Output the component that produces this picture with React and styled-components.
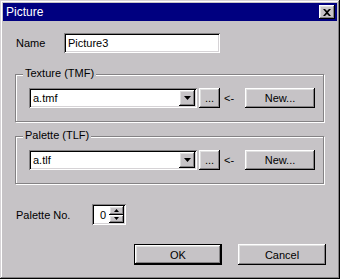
import React from 'react'
import styled, { createGlobalStyle } from 'styled-components'

const Global = createGlobalStyle`
  html, body { margin: 0; padding: 0; background: #c6c3c6; }
  * { box-sizing: border-box; }
  body { font-family: "Liberation Sans", Arial, sans-serif; font-size: 11px; color: #000; }
`

const raised = `
  box-shadow: inset -1px -1px 0 #000, inset 1px 1px 0 #fff,
    inset -2px -2px 0 #848284, inset 2px 2px 0 #dfdfdf;
`
const sunken = `
  box-shadow: inset 1px 1px 0 #848284, inset -1px -1px 0 #fff,
    inset 2px 2px 0 #000, inset -2px -2px 0 #d6d3d6;
`

const Window = styled.div`
  width: 340px;
  height: 279px;
  padding: 3px;
  background: #c6c3c6;
  display: flex;
  flex-direction: column;
  box-shadow: inset -1px -1px 0 #000, inset 1px 1px 0 #d6d3d6,
    inset -2px -2px 0 #848284, inset 2px 2px 0 #fff;
`

const TitleBar = styled.div`
  height: 18px;
  background: #000080;
  display: flex;
  align-items: center;
  justify-content: space-between;
  padding: 0 2px 0 3px;
  color: #fff;
  font-size: 12px;
`

const CloseBtn = styled.div`
  width: 16px;
  height: 14px;
  background: #c6c3c6;
  display: flex;
  align-items: center;
  justify-content: center;
  ${raised}
`

const Body = styled.div`
  flex: 1;
  display: flex;
  flex-direction: column;
  padding: 12px 11px 0 12px;
`

const Row = styled.div`
  display: flex;
  align-items: center;
  height: ${p => p.$h || 20}px;
  margin-top: ${p => p.$mt || 0}px;
`

const Label = styled.span`
  width: ${p => p.$w}px;
  padding-left: 1px;
`

const TextField = styled.div`
  width: ${p => p.$w}px;
  height: ${p => p.$h || 20}px;
  background: #fff;
  display: flex;
  align-items: center;
  padding-left: 4px;
  ${sunken}
`

const Group = styled.div`
  position: relative;
  width: 309px;
  height: 48px;
  margin-top: ${p => p.$mt}px;
  padding: 13px 0 0 13px;
  border: 1px solid #848284;
  box-shadow: 1px 1px 0 #fff, inset 1px 1px 0 #fff;
`

const Legend = styled.span`
  position: absolute;
  top: -8px;
  left: 7px;
  padding: 0 2px;
  background: #c6c3c6;
`

const Combo = styled.div`
  width: 168px;
  height: 20px;
  background: #fff;
  display: flex;
  align-items: center;
  justify-content: space-between;
  padding: 2px;
  ${sunken}
`

const ComboText = styled.span`
  padding-left: 2px;
`

const DropBtn = styled.div`
  width: 16px;
  height: 16px;
  background: #c6c3c6;
  display: flex;
  align-items: center;
  justify-content: center;
  ${raised}
`

const Button = styled.div`
  width: ${p => p.$w}px;
  height: ${p => p.$h || 20}px;
  margin-left: ${p => p.$ml || 0}px;
  background: #c6c3c6;
  display: flex;
  align-items: center;
  justify-content: center;
  ${raised}
  ${p => p.$default && `
    border: 1px solid #000;
  `}
`

const Arrow = styled.span`
  margin-left: 4px;
  width: 19px;
`

const Spinner = styled.div`
  width: 34px;
  height: 21px;
  background: #fff;
  display: flex;
  align-items: stretch;
  padding: 2px;
  ${sunken}
`

const SpinText = styled.span`
  flex: 1;
  display: flex;
  align-items: center;
  padding-left: 6px;
`

const SpinBtns = styled.div`
  width: 15px;
  display: flex;
  flex-direction: column;
`

const SpinBtn = styled.div`
  flex: 1;
  background: #c6c3c6;
  display: flex;
  align-items: center;
  justify-content: center;
  ${raised}
`

const Footer = styled.div`
  display: flex;
  justify-content: flex-end;
  gap: 16px;
  margin-top: 19px;
`

const Tri = ({ down = true, w = 7 }) => {
  const h = Math.ceil(w / 2)
  return (
    <svg width={w} height={h} viewBox={`0 0 ${w} ${h}`}>
      <polygon
        points={down ? `0,0 ${w},0 ${w / 2},${h}` : `0,${h} ${w},${h} ${w / 2},0`}
        fill="#000"
      />
    </svg>
  )
}

const FileRow = ({ value }) => (
  <Row>
    <Combo>
      <ComboText>{value}</ComboText>
      <DropBtn><Tri /></DropBtn>
    </Combo>
    <Button $w={21} $ml={2}>...</Button>
    <Arrow>&lt;-</Arrow>
    <Button $w={70} $ml={2}>New...</Button>
  </Row>
)

export default function App() {
  return (
    <>
      <Global />
      <Window>
        <TitleBar>
          <span>Picture</span>
          <CloseBtn>
            <svg width="8" height="7" viewBox="0 0 8 7">
              <path d="M0 0h2l2 2 2-2h2L5 3.5 8 7H6L4 5 2 7H0l3-3.5z" fill="#000" />
            </svg>
          </CloseBtn>
        </TitleBar>
        <Body>
          <Row>
            <Label $w={49}>Name</Label>
            <TextField $w={156}>Picture3</TextField>
          </Row>
          <Group $mt={21}>
            <Legend>Texture (TMF)</Legend>
            <FileRow value="a.tmf" />
          </Group>
          <Group $mt={14}>
            <Legend>Palette (TLF)</Legend>
            <FileRow value="a.tlf" />
          </Group>
          <Row $h={21} $mt={20}>
            <Label $w={77}>Palette No.</Label>
            <Spinner>
              <SpinText>0</SpinText>
              <SpinBtns>
                <SpinBtn><Tri down={false} w={5} /></SpinBtn>
                <SpinBtn><Tri w={5} /></SpinBtn>
              </SpinBtns>
            </Spinner>
          </Row>
          <Footer>
            <Button $w={88} $h={21} $default>OK</Button>
            <Button $w={88} $h={21}>Cancel</Button>
          </Footer>
        </Body>
      </Window>
    </>
  )
}
